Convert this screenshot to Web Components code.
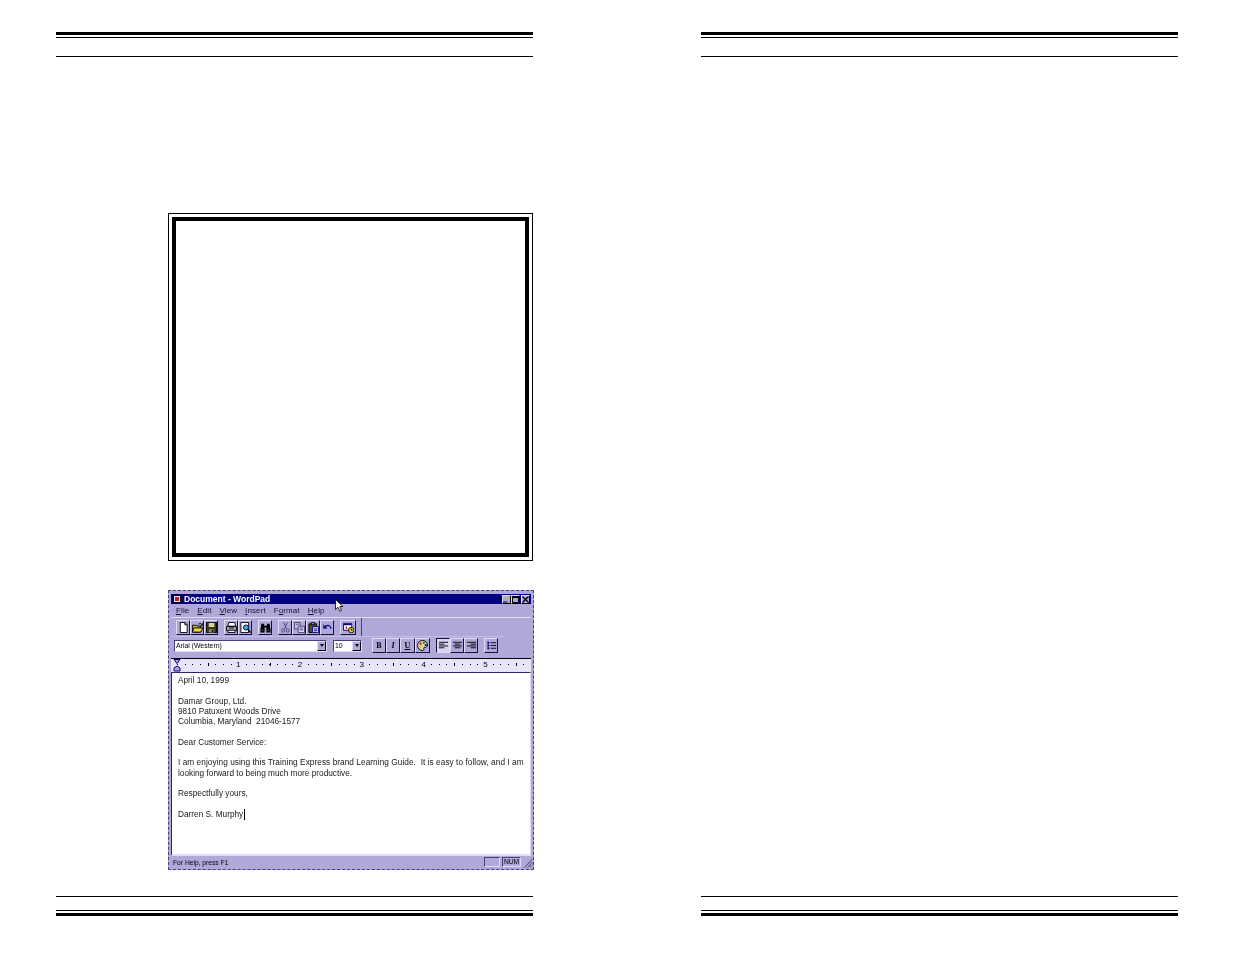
<!DOCTYPE html>
<html lang="en">
<head>
<meta charset="utf-8">
<title>Document - WordPad</title>
<style>
  html, body { margin: 0; background: #fff; }
  body { display: flex; gap: 168px; padding-left: 56px; font-family: "Liberation Sans", Arial, sans-serif; }
</style>
</head>
<body>
  <manual-page>
    <double-frame></double-frame>
    <wp-window>April 10, 1999

Damar Group, Ltd.
9810 Patuxent Woods Drive
Columbia, Maryland  21046-1577

Dear Customer Service:

<span style="letter-spacing:.05px">I am enjoying using this Training Express brand Learning Guide.  It is easy to follow, and I am</span>
looking forward to being much more productive.

Respectfully yours,

Darren S. Murphy<text-caret></text-caret></wp-window>
  </manual-page>
  <manual-page></manual-page>

<script>
// Icons of the toolbar buttons, 12x12 grid
const ICONS = {
  nuevo: '<path d="M2.5 .5h5l2.5 2.5v8.500h-7.500z" fill="#fff" stroke="#000"/><path d="M7.500 .5v2.500h2.500" fill="none" stroke="#000"/>',
  abrir: '<path d="M.5 3.500h4l1 1h4v6.500h-9z" fill="#c8b030" stroke="#000"/><path d="M2 6.500h10l-2.500 4.500h-9z" fill="#f0d848" stroke="#000"/><path d="M7 2.500q2-2 3.500 0l.8-.8v2.500h-2.300" fill="none" stroke="#000"/>',
  guardar: '<path d="M.5 .5h11v11h-11z" fill="#38381c" stroke="#000"/><path d="M3 1h6v4.500h-6z" fill="#d8d4a8"/><path d="M3 8h6v3.500h-6z" fill="#8c8c60"/><path d="M6.500 8.500h1.500v2.500h-1.500z" fill="#000"/>',
  imprimir: '<path d="M3 .5h6.500l1 4h-8.500z" fill="#fff" stroke="#000"/><path d="M.5 5h11v4.500h-11z" fill="#a8a4b8" stroke="#000"/><path d="M2.500 9h7l.5 2.500h-8z" fill="#fff" stroke="#000"/><path d="M3.500 6.500h5" stroke="#000"/>',
  vista: '<path d="M1 .5h8.500v11h-8.500z" fill="#fff" stroke="#000"/><circle cx="6.500" cy="6" r="2.800" fill="#50a8b8" stroke="#000080"/><path d="M8.500 8l3 3.500" stroke="#000" stroke-width="1.500"/>',
  buscar: '<path d="M1.500 2h3v2h3v-2h3l1 7h-4.500v-3h-2v3h-4.500z" fill="#000"/><rect x=".5" y="8" width="4.500" height="3.500" fill="#000"/><rect x="7" y="8" width="4.500" height="3.500" fill="#000"/><path d="M2 9h1M9 9h1" stroke="#b0a8d8"/>',
  cortar: '<path d="M4 .5l3 6.500M8 .5l-3 6.500" stroke="#484078" fill="none"/><circle cx="3.500" cy="9.300" r="1.800" fill="none" stroke="#484078"/><circle cx="8.500" cy="9.300" r="1.800" fill="none" stroke="#484078"/>',
  copiar: '<path d="M.5 .5h6v7h-6z" fill="#c8c4e4" stroke="#484078"/><path d="M4.500 4.500h7v7h-7z" fill="#d8d4f0" stroke="#484078"/><path d="M2 2.500h3M6 6.500h4M6 8.500h4" stroke="#484078"/>',
  pegar: '<path d="M1 2h8.500v9.500h-8.500z" fill="#50482c" stroke="#000"/><path d="M3.500 .5h3.500v2.500h-3.500z" fill="#a8a4b8" stroke="#000"/><path d="M5 5h6.500v6.500h-6.500z" fill="#d8d4f0" stroke="#000080"/><path d="M6.500 7.500h3.500M6.500 9.500h3.500" stroke="#000080"/>',
  deshacer: '<path d="M2 3v3.500h3.500" fill="none" stroke="#000080" stroke-width="1.300"/><path d="M2.500 6q3-3.500 6-1.500 1.500 1 1 3" fill="none" stroke="#000080" stroke-width="1.300"/>',
  fecha: '<path d="M.5 1.500h9v7.500h-9z" fill="#fff" stroke="#000080"/><path d="M1 2h8v1.500h-8z" fill="#000080"/><path d="M3 5h1.500v2.500h-1.500z" fill="#c00000"/><circle cx="9" cy="8.800" r="3" fill="#e8e020" stroke="#000"/><path d="M9 7v2h1.500" fill="none" stroke="#000"/>',
  paleta: '<path d="M6 .5c3.500 0 5.500 2.500 5.500 5 0 2-1.500 2.500-3 2.500-1.200 0-1.500 1-1 2 .4 1-.3 1.500-1.500 1.500-3 0-5.500-2.500-5.500-5.500s2.500-5.500 5.500-5.500z" fill="#d8d4a8" stroke="#000"/><rect x="3" y="3" width="2" height="2" fill="#b00000"/><rect x="6.500" y="2" width="2" height="2" fill="#008000"/><rect x="8.500" y="4.500" width="2" height="2" fill="#0000b0"/><rect x="2.500" y="6.500" width="2" height="2" fill="#d8c000"/>',
  izquierda: '<path d="M1 2.500h10M1 4.500h6M1 6.500h10M1 8.500h6" stroke="#000" stroke-width="1"/>',
  centro: '<path d="M1 2.500h10M3 4.500h6M1 6.500h10M3 8.500h6" stroke="#000" stroke-width="1"/>',
  derecha: '<path d="M1 2.500h10M5 4.500h6M1 6.500h10M5 8.500h6" stroke="#000" stroke-width="1"/>',
  vinetas: '<path d="M1.500 2h2v2h-2zM1.500 5h2v2h-2zM1.500 8h2v2h-2z" fill="#000080"/><path d="M5 3h6M5 6h6M5 9h6" stroke="#000" stroke-width="1"/>'
};

// Printed manual page: rules on top and bottom, content between them
class ManualPage extends HTMLElement {
  constructor() {
    super();
    this.attachShadow({ mode: 'open' });
    this.shadowRoot.innerHTML = `
      <style>
        :host { display: flex; flex-direction: column; width: 477px; height: 954px; }
        header { padding-top: 32px; }
        footer { padding-bottom: 38px; }
        .grueso { height: 3px; background: #000; }
        .fino { height: 1px; background: #000; }
        main { flex: 1; display: flex; flex-direction: column; gap: 29px; padding: 156px 0 0 112px; }
      </style>
      <header>
        <div class="grueso"></div>
        <div class="fino" style="margin-top:2px"></div>
        <div class="fino" style="margin-top:18px"></div>
      </header>
      <main><slot></slot></main>
      <footer>
        <div class="fino"></div>
        <div class="fino" style="margin-top:13px"></div>
        <div class="grueso" style="margin-top:2px"></div>
      </footer>`;
  }
}

// Empty box with a thin outer line and a thick inner one
class DoubleFrame extends HTMLElement {
  constructor() {
    super();
    this.attachShadow({ mode: 'open' });
    this.shadowRoot.innerHTML = `
      <style>
        :host { display: block; box-sizing: border-box; width: 365px; height: 348px; border: 1px solid #000; padding: 3px; }
        div { box-sizing: border-box; height: 100%; border: 4px solid #000; }
      </style>
      <div></div>`;
  }
}

// Raised toolbar button
class ToolButton extends HTMLElement {
  constructor() {
    super();
    this.attachShadow({ mode: 'open' });
  }

  connectedCallback() {
    const icono = ICONS[this.getAttribute('icon')];
    this.shadowRoot.innerHTML = `
      <style>
        :host { display: flex; box-sizing: border-box; width: 14px; height: 15px; align-items: center; justify-content: center;
          border: 1px solid; border-color: #e0dcf8 #181038 #181038 #e0dcf8; font: bold 8px "Liberation Serif", serif; color: #000; }
        :host([pressed]) { background: #d8d4f0; border-color: #181038 #e0dcf8 #e0dcf8 #181038; }
        svg { width: 11px; height: 11px; display: block; }
      </style>
      ${icono ? `<svg viewBox="0 0 12 12">${icono}</svg>` : '<slot></slot>'}`;
  }
}

// Dropdown with white field and arrow button
class WpCombo extends HTMLElement {
  constructor() {
    super();
    this.attachShadow({ mode: 'open' });
    this.shadowRoot.innerHTML = `
      <style>
        :host { display: flex; box-sizing: border-box; height: 12px; background: #fff; border: 1px solid; border-color: #484078 #e0dcf8 #e0dcf8 #484078;
          font-size: 6.900px; line-height: 10px; color: #000; }
        span { flex: 1; padding-left: 1px; overflow: hidden; white-space: nowrap; }
        i { display: flex; width: 9px; align-items: center; justify-content: center; background: #b0a8d8;
          border: 1px solid; border-color: #e0dcf8 #000 #000 #e0dcf8; box-sizing: border-box; }
        i::before { content: ""; border: 2px solid transparent; border-top: 3px solid #000; border-bottom: 0; }
      </style>
      <span><slot></slot></span><i></i>`;
  }
}

// Ruler with eighth-inch dots and the inch numbers
class WpRuler extends HTMLElement {
  constructor() {
    super();
    this.attachShadow({ mode: 'open' });
    const numeros = [1, 2, 3, 4, 5].map((n) => `<span>${n}</span>`).join('');
    this.shadowRoot.innerHTML = `
      <style>
        :host { display: flex; position: relative; flex: none; height: 14px; box-sizing: border-box; border-top: 1px solid #000; padding-left: 5.500px; overflow: hidden;
          background-color: #e8e4f8;
          background-image: repeating-linear-gradient(90deg, #000 0 1px, transparent 1px 7.700px),
            repeating-linear-gradient(90deg, #000 0 1px, transparent 1px 30.800px);
          background-size: 110% 1px, 110% 3px; background-position: 6px 5px, 36.800px 4px; background-repeat: no-repeat;
          font-size: 8px; line-height: 11px; color: #000; }
        span { flex: 0 0 61.850px; text-align: right; position: relative; left: 2px;
          background: linear-gradient(#e8e4f8, #e8e4f8) right 0 top 2px / 5px 8px no-repeat; }
        svg { position: absolute; left: 2px; top: 0; width: 9px; height: 13px; }
      </style>
      ${numeros}
      <svg viewBox="0 0 9 13"><path d="M1 .5h6l-3 4zM4 7l3 2v3h-6v-3z" fill="#b0a8d8" stroke="#000080"/></svg>`;
  }
}

// WordPad window with its bars; the slot holds the document text
class WpWindow extends HTMLElement {
  constructor() {
    super();
    this.attachShadow({ mode: 'open' });
    const boton = (icono) => `<tool-button icon="${icono}"></tool-button>`;
    this.shadowRoot.innerHTML = `
      <style>
        :host { display: flex; flex-direction: column; position: relative; box-sizing: border-box; width: 366px; height: 280px;
          padding: 3px 2px 1px; background: #b0a8d8; border: 1px dashed #484078; filter: blur(.3px); color: #000; font-size: 8px; }
        .titulo { display: flex; align-items: center; height: 10px; flex: none; background: #000080; color: #fff; padding: 0 1px 0 2px; gap: 3px;
          font-weight: bold; font-size: 8.500px; }
        .titulo span { flex: 1; }
        .titulo svg { width: 8px; height: 8px; flex: none; }
        .controles { display: flex; }
        .controles i { display: block; box-sizing: border-box; width: 9px; height: 9px; background: #b0a8d8; border: 1px solid; border-color: #e0dcf8 #000 #000 #e0dcf8; }
        .controles svg { display: block; width: 7px; height: 7px; }
        .menu { display: flex; flex: none; height: 13px; align-items: center; padding-left: 5px; gap: 8px; font-size: 8px; color: #181030; letter-spacing: .1px; }
        .menu u { text-underline-offset: 1px; }
        .barra { display: flex; align-items: center; flex: none; border-top: 1px solid #e0dcf8; height: 18px; }
        .herramientas { box-sizing: border-box; width: 191px; padding-left: 5px; border-right: 1px solid #484078; height: 100%; display: flex; align-items: center; }
        .grupo { display: flex; margin-right: 6px; }
        .formato { display: flex; align-items: center; flex: none; height: 20px; box-sizing: border-box; width: 333px; padding: 0 0 2px 3px; margin-bottom: 2px; border-top: 1px solid #c4bee8; }
        wp-combo.fuente { width: 153px; margin-right: 6px; }
        wp-combo.tamano { width: 29px; margin-right: 10px; }
        .formato tool-button.ancho { width: 15px; }
        .documento { flex: 1; min-height: 0; background: #fff; border: 1px solid; border-color: #302868 #e0dcf8 #e0dcf8 #302868; border-width: 1px 1px 2px 1px;
          box-sizing: border-box; padding: 3px 0 0 6px; font-size: 8.270px; line-height: 10.280px; white-space: pre; color: #202020; overflow: hidden; }
        .estado { display: flex; flex: none; align-items: center; height: 12px; font-size: 6.700px; padding-left: 2px; }
        .estado span { flex: 1; }
        .estado i { display: block; box-sizing: border-box; height: 10px; border: 1px solid; border-color: #484078 #e0dcf8 #e0dcf8 #484078; font-style: normal; line-height: 8px; text-align: center; }
        .estado svg { width: 10px; height: 11px; margin: 0 -2px 0 2px; }
        .flecha { position: absolute; left: 166px; top: 8px; width: 9px; height: 13px; }
      </style>
      <div class="titulo">
        <svg viewBox="0 0 8 8"><rect x=".5" y=".5" width="7" height="7" fill="#e8e4f8" stroke="#000"/><rect x="2" y="2" width="4" height="4" fill="#c02020"/></svg>
        <span>Document - WordPad</span>
        <div class="controles">
          <i><svg viewBox="0 0 7 7"><path d="M0 5.500h4.500v1h-4.500z" fill="#000"/></svg></i>
          <i><svg viewBox="0 0 7 7"><path d="M.5 1.500h6v5h-6z" fill="none" stroke="#000"/><path d="M0 0h7v1.500h-7z" fill="#000"/></svg></i>
          <i style="margin-left:1px"><svg viewBox="0 0 7 7"><path d="M.5 .5l6 6M6.500 .5l-6 6" stroke="#000" stroke-width="1.300"/></svg></i>
        </div>
      </div>
      <div class="menu">
        <span><u>F</u>ile</span><span><u>E</u>dit</span><span><u>V</u>iew</span><span><u>I</u>nsert</span><span>F<u>o</u>rmat</span><span><u>H</u>elp</span>
      </div>
      <div class="barra">
        <div class="herramientas">
          <div class="grupo">${['nuevo', 'abrir', 'guardar'].map(boton).join('')}</div>
          <div class="grupo">${['imprimir', 'vista'].map(boton).join('')}</div>
          <div class="grupo">${boton('buscar')}</div>
          <div class="grupo">${['cortar', 'copiar', 'pegar', 'deshacer'].map(boton).join('')}</div>
          <div class="grupo" style="margin:0"><tool-button icon="fecha" style="width:16px"></tool-button></div>
        </div>
      </div>
      <div class="formato">
        <wp-combo class="fuente">Arial (Western)</wp-combo>
        <wp-combo class="tamano">10</wp-combo>
        <div class="grupo">
          <tool-button>B</tool-button>
          <tool-button style="font-style:italic">I</tool-button>
          <tool-button class="ancho" style="text-decoration:underline">U</tool-button>
          <tool-button class="ancho" icon="paleta"></tool-button>
        </div>
        <div class="grupo">
          <tool-button icon="izquierda" pressed></tool-button>
          <tool-button icon="centro"></tool-button>
          <tool-button icon="derecha"></tool-button>
        </div>
        <div class="grupo"><tool-button icon="vinetas"></tool-button></div>
      </div>
      <wp-ruler></wp-ruler>
      <div class="documento"><slot></slot></div>
      <div class="estado">
        <span>For Help, press F1</span>
        <i style="width:16px"></i>
        <i style="width:19px;margin-left:2px">NUM</i>
        <svg viewBox="0 0 10 11"><path d="M9.500 2l-8 8.500M9.500 5l-5 5.500M9.500 8l-2.500 2.500" stroke="#484078" fill="none"/></svg>
      </div>
      <svg class="flecha" viewBox="0 0 9 13"><path d="M.5 .5v10l2.500-2.300 1.700 4 1.800-.8-1.700-3.900h3.200z" fill="#fff" stroke="#000" stroke-width=".8"/></svg>`;
  }
}

// Text cursor after the last word, laid over the line so it does not grow it
class TextCaret extends HTMLElement {
  constructor() {
    super();
    this.attachShadow({ mode: 'open' });
    // white-space comes inherited as pre from the document area
    this.shadowRoot.innerHTML = `
      <style>
        :host { display: inline-block; position: relative; width: 0; height: 0; white-space: normal; }
        div { position: absolute; left: 1px; top: -8px; width: 1px; height: 11px; background: #000; }
      </style>
      <div></div>`;
  }
}

customElements.define('manual-page', ManualPage);
customElements.define('double-frame', DoubleFrame);
customElements.define('tool-button', ToolButton);
customElements.define('wp-combo', WpCombo);
customElements.define('wp-ruler', WpRuler);
customElements.define('wp-window', WpWindow);
customElements.define('text-caret', TextCaret);
</script>
</body>
</html>
